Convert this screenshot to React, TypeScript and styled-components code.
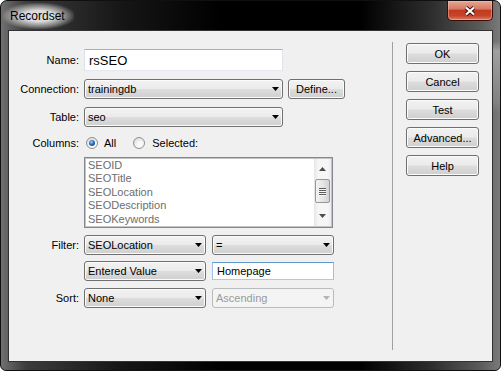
import styled, { createGlobalStyle } from "styled-components";

const GlobalStyle = createGlobalStyle`
  html, body {
    margin: 0;
    padding: 0;
    background: #ffffff;
  }
  body {
    font-family: "Liberation Sans", Arial, sans-serif;
    font-size: 11px;
  }
`;

const Frame = styled.div`
  box-sizing: border-box;
  width: 501px;
  height: 371px;
  display: flex;
  flex-direction: column;
  padding: 0 7px 8px;
  border: 1px solid #101010;
  border-radius: 7px 7px 6px 6px;
  overflow: hidden;
  color: #000;
  background:
    linear-gradient(
        180deg,
        rgba(0, 0, 0, 0) 0px,
        rgba(0, 0, 0, 0) 40px,
        rgba(170, 170, 170, 0.8) 50px,
        rgba(140, 140, 140, 0.6) 100px,
        rgba(0, 0, 0, 0) 112px
      )
      right top / 7px 100% no-repeat,
    linear-gradient(
      90deg,
      #707070 0%,
      #3c3c3c 5%,
      #161616 24%,
      #000 44%,
      #000 72%,
      #2c2c2c 86%,
      #5a5a5a 96%,
      #7a7a7a 100%
    );
`;

const TitleBar = styled.div`
  height: 29px;
  flex-shrink: 0;
  display: flex;
  align-items: flex-start;
  justify-content: space-between;
  margin: 0 -7px;
`;

const Title = styled.span`
  margin: 2px 0 0 2px;
  padding: 0 9px 0 7px;
  height: 26px;
  line-height: 26px;
  font-size: 12px;
  color: #000;
  background: radial-gradient(
    ellipse at center,
    rgba(228, 228, 228, 0.95) 30%,
    rgba(200, 200, 200, 0.55) 55%,
    rgba(200, 200, 200, 0) 75%
  );
`;

const CloseButton = styled.div`
  box-sizing: border-box;
  width: 46px;
  height: 20px;
  margin-right: 7px;
  display: flex;
  align-items: center;
  justify-content: center;
  border: 1px solid #3a0d07;
  border-top: none;
  border-radius: 0 0 5px 5px;
  box-shadow: inset 0 0 0 1px rgba(255, 200, 180, 0.45);
  background: linear-gradient(
    180deg,
    #e6a797 0%,
    #d67a62 42%,
    #c23a20 50%,
    #c5452a 78%,
    #d9846c 100%
  );
`;

const Body = styled.div`
  flex: 1;
  display: flex;
  background: #f0f0f0;
  border: 1px solid #333;
`;

const FormArea = styled.div`
  width: 383px;
  flex-shrink: 0;
  display: flex;
  flex-direction: column;
  padding-top: 18px;
`;

const Separator = styled.div`
  width: 1px;
  background: #a0a0a0;
  margin: 11px 0 11px;
`;

const ButtonColumn = styled.div`
  display: flex;
  flex-direction: column;
  gap: 7px;
  padding: 12px 0 0 13px;
`;

const Row = styled.div<{ $top: number; $h?: number }>`
  display: flex;
  align-items: center;
  margin-top: ${(p) => p.$top}px;
  height: ${(p) => p.$h ?? 20}px;
`;

const Label = styled.span`
  width: 70px;
  flex-shrink: 0;
  margin-right: 5px;
  text-align: right;
  white-space: nowrap;
`;

const PushButton = styled.div<{ $w: number; $h: number; $gap?: number }>`
  box-sizing: border-box;
  width: ${(p) => p.$w}px;
  height: ${(p) => p.$h}px;
  margin-left: ${(p) => p.$gap ?? 0}px;
  display: flex;
  align-items: center;
  justify-content: center;
  border: 1px solid #707070;
  border-radius: 3px;
  box-shadow: inset 0 0 0 1px #fbfbfb;
  background: linear-gradient(180deg, #f2f2f2 0%, #ebebeb 48%, #dddddd 52%, #cfcfcf 100%);
  white-space: nowrap;
`;

const TextBox = styled.div<{ $w: number; $h: number; $focus?: boolean; $size?: number }>`
  box-sizing: border-box;
  width: ${(p) => p.$w}px;
  height: ${(p) => p.$h}px;
  display: flex;
  align-items: center;
  padding-left: 4px;
  background: #fff;
  font-size: ${(p) => p.$size ?? 11}px;
  border: 1px solid;
  border-color: ${(p) =>
    p.$focus ? "#5f97cf #9cc1e4 #a9cbe9 #9cc1e4" : "#abadb3 #e2e3ea #e3e9ef #dbdfe6"};
`;

const Combo = styled.div<{ $w: number; $disabled?: boolean; $gap?: number }>`
  box-sizing: border-box;
  width: ${(p) => p.$w}px;
  height: 20px;
  margin-left: ${(p) => p.$gap ?? 0}px;
  display: flex;
  align-items: center;
  justify-content: space-between;
  padding: 0 3px 0 3px;
  border: 1px solid ${(p) => (p.$disabled ? "#b9bcbf" : "#707070")};
  border-radius: 3px;
  color: ${(p) => (p.$disabled ? "#9a9a9a" : "#000")};
  background: ${(p) =>
    p.$disabled
      ? "#f4f4f4"
      : "linear-gradient(180deg, #f2f2f2 0%, #ebebeb 48%, #dddddd 52%, #cfcfcf 100%)"};
  box-shadow: ${(p) => (p.$disabled ? "none" : "inset 0 0 0 1px #fbfbfb")};
  white-space: nowrap;
`;

const Radio = styled.span<{ $checked?: boolean; $gap: number }>`
  box-sizing: border-box;
  width: 12px;
  height: 12px;
  margin-left: ${(p) => p.$gap}px;
  border-radius: 50%;
  border: 1px solid #8e8f8f;
  display: inline-flex;
  align-items: center;
  justify-content: center;
  background: radial-gradient(circle at 65% 70%, #ffffff 0%, #f4f4f4 40%, #d2d2d2 100%);
  &::after {
    content: "";
    display: ${(p) => (p.$checked ? "block" : "none")};
    width: 6px;
    height: 6px;
    border-radius: 50%;
    background: radial-gradient(circle at 40% 35%, #9bd6ff 0%, #2a6bbf 45%, #0b2f62 100%);
  }
`;

const RadioText = styled.span<{ $gap: number }>`
  margin-left: ${(p) => p.$gap}px;
`;

const ListBox = styled.div`
  box-sizing: border-box;
  width: 249px;
  height: 71px;
  margin-left: 75px;
  display: flex;
  background: #fff;
  border: 1px solid #828790;
  box-shadow: inset 0 0 0 1px #c4c4c4;
`;

const ListItems = styled.div`
  flex: 1;
  padding: 1px 0 0 3px;
  line-height: 13.4px;
  color: #6d6d6d;
  overflow: hidden;
`;

const ScrollBar = styled.div`
  width: 17px;
  display: flex;
  flex-direction: column;
  align-items: center;
  margin: 1px 1px 1px 0;
  background: linear-gradient(90deg, #e6e6e6 0%, #f6f6f6 25%, #f6f6f6 80%, #ececec 100%);
`;

const ScrollArrow = styled.div`
  height: 20px;
  display: flex;
  align-items: center;
  justify-content: center;
`;

const Thumb = styled.div`
  box-sizing: border-box;
  width: 15px;
  height: 24px;
  display: flex;
  flex-direction: column;
  align-items: center;
  justify-content: center;
  gap: 1px;
  border: 1px solid #979797;
  border-radius: 2px;
  background: linear-gradient(90deg, #f4f4f4 0%, #e6e6e6 50%, #d2d2d2 100%);
`;

const Grip = styled.span`
  width: 7px;
  height: 1px;
  background: #5a5a5a;
  box-shadow: 0 1px 0 #f8f8f8;
`;

const Spacer = styled.div`
  flex: 1;
`;

function Arrow({ up, color = "#000" }: { up?: boolean; color?: string }) {
  return (
    <svg width="7" height="4" viewBox="0 0 7 4">
      <polygon points={up ? "0,4 7,4 3.5,0" : "0,0 7,0 3.5,4"} fill={color} />
    </svg>
  );
}

const columns = ["SEOID", "SEOTitle", "SEOLocation", "SEODescription", "SEOKeywords"];
const actions = ["OK", "Cancel", "Test", "Advanced...", "Help"];

export default function App() {
  return (
    <>
      <GlobalStyle />
      <Frame>
        <TitleBar>
          <Title>Recordset</Title>
          <CloseButton>
            <svg width="12" height="10" viewBox="0 0 12 10">
              <path d="M2 1.5 L10 8.5 M10 1.5 L2 8.5" stroke="#3b0f08" strokeWidth="4" />
              <path d="M2 1.5 L10 8.5 M10 1.5 L2 8.5" stroke="#fff" strokeWidth="2.2" />
            </svg>
          </CloseButton>
        </TitleBar>
        <Body>
          <FormArea>
            <Row $top={0} $h={22}>
              <Label>Name:</Label>
              <TextBox $w={199} $h={22} $size={13}>
                rsSEO
              </TextBox>
            </Row>
            <Row $top={8}>
              <Label>Connection:</Label>
              <Combo $w={199}>
                trainingdb
                <Arrow />
              </Combo>
              <PushButton $w={57} $h={20} $gap={5}>
                Define...
              </PushButton>
            </Row>
            <Row $top={8}>
              <Label>Table:</Label>
              <Combo $w={199}>
                seo
                <Arrow />
              </Combo>
            </Row>
            <Row $top={6}>
              <Label>Columns:</Label>
              <Radio $checked $gap={2} />
              <RadioText $gap={6}>All</RadioText>
              <Radio $gap={17} />
              <RadioText $gap={7}>Selected:</RadioText>
            </Row>
            <Row $top={4} $h={71}>
              <ListBox>
                <ListItems>
                  {columns.map((c) => (
                    <div key={c}>{c}</div>
                  ))}
                </ListItems>
                <ScrollBar>
                  <ScrollArrow>
                    <Arrow up color="#4d4d4d" />
                  </ScrollArrow>
                  <Thumb>
                    <Grip />
                    <Grip />
                    <Grip />
                    <Grip />
                  </Thumb>
                  <Spacer />
                  <ScrollArrow>
                    <Arrow color="#4d4d4d" />
                  </ScrollArrow>
                </ScrollBar>
              </ListBox>
            </Row>
            <Row $top={7}>
              <Label>Filter:</Label>
              <Combo $w={122}>
                SEOLocation
                <Arrow />
              </Combo>
              <Combo $w={122} $gap={6}>
                =
                <Arrow />
              </Combo>
            </Row>
            <Row $top={6}>
              <Label />
              <Combo $w={122}>
                Entered Value
                <Arrow />
              </Combo>
              <Spacer style={{ flex: "0 0 6px" }} />
              <TextBox $w={122} $h={18} $focus>
                Homepage
              </TextBox>
            </Row>
            <Row $top={7}>
              <Label>Sort:</Label>
              <Combo $w={122}>
                None
                <Arrow />
              </Combo>
              <Combo $w={122} $gap={6} $disabled>
                Ascending
                <Arrow color="#b4b4b4" />
              </Combo>
            </Row>
          </FormArea>
          <Separator />
          <ButtonColumn>
            {actions.map((a) => (
              <PushButton key={a} $w={73} $h={21}>
                {a}
              </PushButton>
            ))}
          </ButtonColumn>
        </Body>
      </Frame>
    </>
  );
}
